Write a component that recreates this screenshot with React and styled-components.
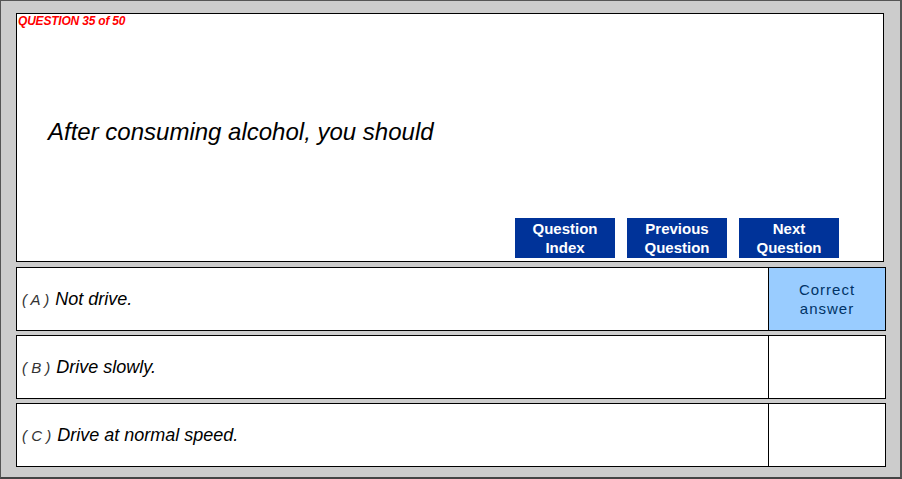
import React from 'react'
import styled, { createGlobalStyle } from 'styled-components'

const GlobalStyle = createGlobalStyle`
  body {
    margin: 0;
    background: #ffffff;
    font-family: "Liberation Sans", Arial, sans-serif;
  }
`;

const answers = [
  { letter: 'A', text: 'Not drive.', correct: true },
  { letter: 'B', text: 'Drive slowly.' },
  { letter: 'C', text: 'Drive at normal speed.' },
];

function App() {
  return (
    <>
      <GlobalStyle />
      <Frame>
        <QuestionBox>
          <Counter>QUESTION 35 of 50</Counter>
          <QuestionText>After consuming alcohol, you should</QuestionText>
          <NavBar>
            <NavButton>Question<br />Index</NavButton>
            <NavButton>Previous<br />Question</NavButton>
            <NavButton>Next<br />Question</NavButton>
          </NavBar>
        </QuestionBox>
        <AnswerList>
          {answers.map(a => (
            <AnswerRow key={a.letter}>
              <AnswerCell>
                <Letter>( {a.letter} )</Letter>
                <AnswerText>{a.text}</AnswerText>
              </AnswerCell>
              <ResultCell $correct={a.correct}>
                {a.correct && <>Correct<br />answer</>}
              </ResultCell>
            </AnswerRow>
          ))}
        </AnswerList>
      </Frame>
    </>
  )
}

export default App

const Frame = styled.div`
  box-sizing: border-box;
  width: 902px;
  height: 479px;
  background: #cccccc;
  border: 1px solid #555555;
  border-bottom: 2px solid #444444;
  border-right: 2px solid #555555;
  padding: 12px 0 0 15px;
  display: flex;
  flex-direction: column;
`;

const QuestionBox = styled.div`
  box-sizing: border-box;
  width: 868px;
  height: 249px;
  background: #ffffff;
  border: 1px solid #000000;
  display: flex;
  flex-direction: column;
`;

const Counter = styled.div`
  color: #ff0000;
  font-size: 12px;
  font-weight: bold;
  font-style: italic;
  padding: 1px 0 0 1px;
  line-height: 13px;
  letter-spacing: -0.2px;
`;

const QuestionText = styled.div`
  font-size: 24px;
  font-style: italic;
  color: #000000;
  margin: 90px 0 0 31px;
  line-height: 28px;
`;

const NavBar = styled.div`
  margin-top: auto;
  display: flex;
  gap: 12px;
  padding: 0 0 3px 498px;
`;

const NavButton = styled.div`
  width: 100px;
  height: 40px;
  background: #003399;
  color: #ffffff;
  font-size: 15px;
  font-weight: bold;
  line-height: 19px;
  text-align: center;
  display: flex;
  align-items: center;
  justify-content: center;
`;

const AnswerList = styled.div`
  display: flex;
  flex-direction: column;
  gap: 4px;
  margin-top: 5px;
`;

const AnswerRow = styled.div`
  box-sizing: border-box;
  width: 870px;
  height: 64px;
  background: #ffffff;
  border: 1px solid #000000;
  display: flex;
`;

const AnswerCell = styled.div`
  flex: 1;
  display: flex;
  align-items: center;
  padding-left: 5px;
  gap: 6px;
  font-style: italic;
`;

const Letter = styled.span`
  font-size: 15px;
  color: #333333;
`;

const AnswerText = styled.span`
  font-size: 18px;
  color: #000000;
`;

const ResultCell = styled.div`
  width: 116px;
  border-left: 1px solid #000000;
  background: ${p => (p.$correct ? '#99ccff' : '#ffffff')};
  color: #003366;
  font-size: 15px;
  letter-spacing: 1px;
  line-height: 19px;
  text-align: center;
  display: flex;
  align-items: center;
  justify-content: center;
`;
